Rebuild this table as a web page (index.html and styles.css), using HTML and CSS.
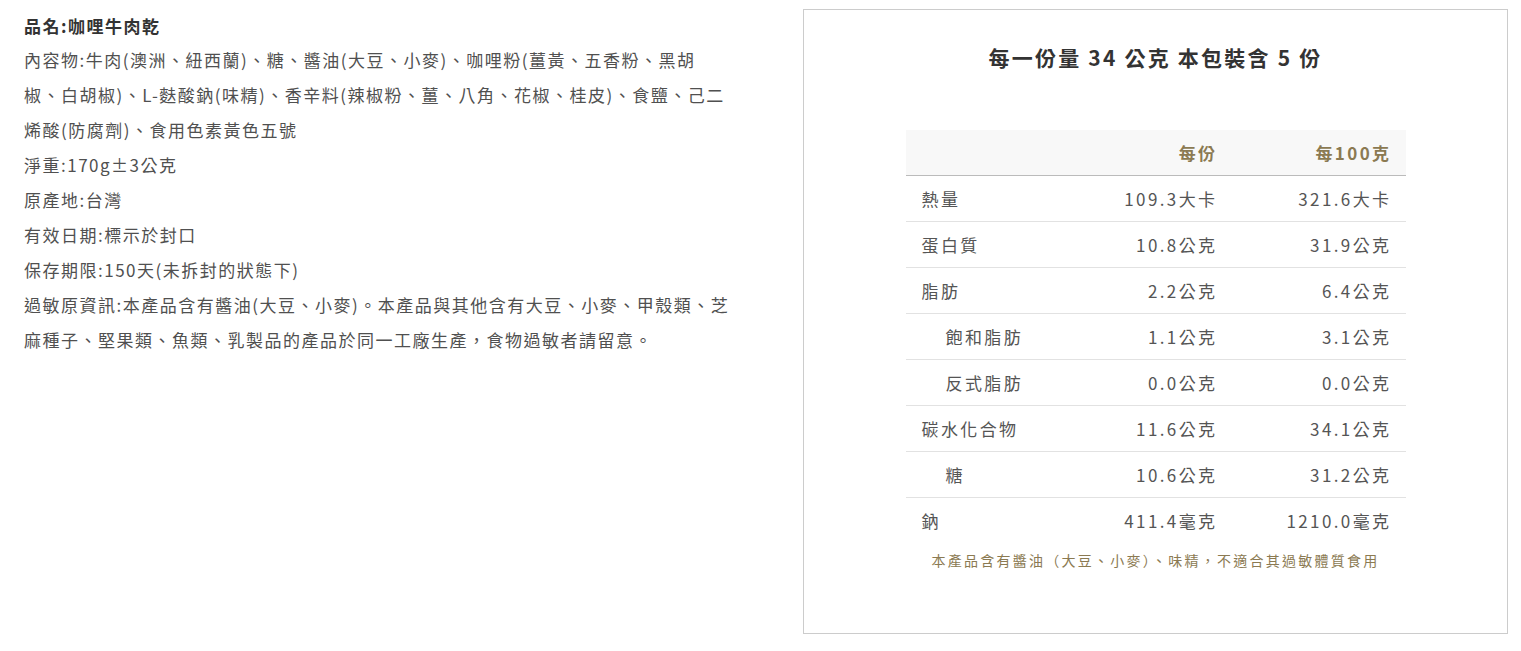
FILE: index.html
```html
<!DOCTYPE html>
<html lang="zh-Hant">
<head>
<meta charset="utf-8">
<title>咖哩牛肉乾</title>
<link rel="stylesheet" href="styles.css">
</head>
<body>
<div class="page">
  <section class="info">
    <p class="name">品名:咖哩牛肉乾</p>
    <p>內容物:牛肉(澳洲、紐西蘭)、糖、醬油(大豆、小麥)、咖哩粉(薑黃、五香粉、黑胡椒、白胡椒)、L-麩酸鈉(味精)、香辛料(辣椒粉、薑、八角、花椒、桂皮)、食鹽、己二烯酸(防腐劑)、食用色素黃色五號</p>
    <p>淨重:170g±3公克</p>
    <p>原產地:台灣</p>
    <p>有效日期:標示於封口</p>
    <p>保存期限:150天(未拆封的狀態下)</p>
    <p>過敏原資訊:本產品含有醬油(大豆、小麥)。本產品與其他含有大豆、小麥、甲殼類、芝麻種子、堅果類、魚類、乳製品的產品於同一工廠生產，食物過敏者請留意。</p>
  </section>
  <section class="nutrition">
    <h2 class="serving">每一份量 34 公克 本包裝含 5 份</h2>
    <table class="facts">
      <thead>
        <tr><th></th><th>每份</th><th>每100克</th></tr>
      </thead>
      <tbody>
        <tr><td>熱量</td><td>109.3大卡</td><td>321.6大卡</td></tr>
        <tr><td>蛋白質</td><td>10.8公克</td><td>31.9公克</td></tr>
        <tr><td>脂肪</td><td>2.2公克</td><td>6.4公克</td></tr>
        <tr><td class="sub">飽和脂肪</td><td>1.1公克</td><td>3.1公克</td></tr>
        <tr><td class="sub">反式脂肪</td><td>0.0公克</td><td>0.0公克</td></tr>
        <tr><td>碳水化合物</td><td>11.6公克</td><td>34.1公克</td></tr>
        <tr><td class="sub">糖</td><td>10.6公克</td><td>31.2公克</td></tr>
        <tr class="last"><td>鈉</td><td>411.4毫克</td><td>1210.0毫克</td></tr>
      </tbody>
    </table>
    <p class="note">本產品含有醬油（大豆、小麥）、味精，不適合其過敏體質食用</p>
  </section>
</div>
</body>
</html>
```

FILE: styles.css
```css
* { box-sizing: border-box; }
html, body { margin: 0; padding: 0; background: #fff; }
body {
  font-family: "Noto Sans CJK TC", "Noto Sans", sans-serif;
  color: #505050;
}
.page {
  display: flex;
  align-items: flex-start;
  padding: 9px 13px 0 24px;
}
.info {
  width: 708px;
  flex: none;
  padding-top: 7px;
}
.info p {
  margin: 0;
  font-size: 17px;
  line-height: 35px;
  letter-spacing: 1.5px;
}
.info .name {
  font-weight: 700;
  color: #333;
  line-height: 19px;
  margin-bottom: 7px;
}
.nutrition {
  margin-left: auto;
  width: 705px;
  height: 625px;
  border: 1px solid #ccc;
  display: flex;
  flex-direction: column;
  align-items: center;
}
.serving {
  margin: 32px 0 0;
  font-size: 21px;
  font-weight: 700;
  letter-spacing: 2.2px;
  color: #333;
  line-height: 30px;
}
.facts {
  margin-top: 58px;
  width: 500px;
  border-collapse: collapse;
  font-size: 17px;
  letter-spacing: 2.4px;
  color: #555;
}
.facts th {
  background: #f8f8f8;
  height: 45px;
  color: #8b7a52;
  font-weight: 700;
  text-align: right;
  padding: 0 14px 0 16px;
  border-bottom: 1px solid #bbb;
}
.facts th:nth-child(3) { width: 174px; }
.facts th:nth-child(2) { width: 160px; }
.facts td {
  height: 46px;
  padding: 0 14px 0 16px;
  text-align: right;
  border-bottom: 1px solid #e2e2e2;
}
.facts td:first-child { text-align: left; }
.facts td.sub { padding-left: 40px; }
.facts tr.last td { border-bottom: none; }
.note {
  margin: 7px 0 0;
  font-size: 14px;
  letter-spacing: 2.25px;
  color: #8b7a52;
}
```
